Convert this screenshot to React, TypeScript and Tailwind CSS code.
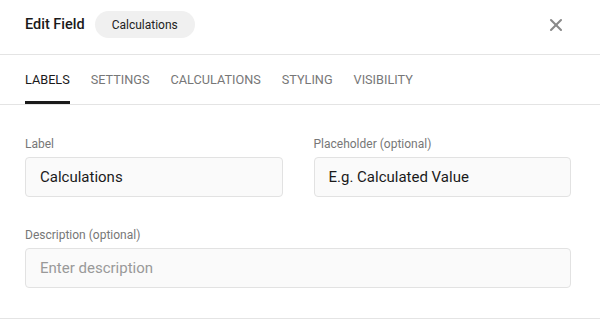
import { X } from 'lucide-react';

const tabs = ['Labels', 'Settings', 'Calculations', 'Styling', 'Visibility'];

export default function App() {
  return (
    <div className="w-[600px] h-[334px] bg-white font-['Roboto',sans-serif] text-[#222]">
      <div className="h-[55px] flex items-center pl-[25px] pr-[34px] pb-[5px] border-b border-[#e4e4e4]">
        <h1 className="text-[14.5px] font-medium text-[#1a1a1a]">Edit Field</h1>
        <span className="ml-[10px] h-[27px] px-[17px] rounded-full bg-[#f0f0f0] text-[12px] text-[#222] flex items-center">
          Calculations
        </span>
        <button className="ml-auto text-[#8a8a8a]">
          <X className="w-[20px] h-[20px]" strokeWidth={2.5} />
        </button>
      </div>

      <div className="flex gap-[21px] px-[25px] border-b border-[#e4e4e4] h-[50px]">
        {tabs.map((t, i) => (
          <div
            key={t}
            className={
              'flex items-center uppercase text-[12.7px] pt-[3px] border-b-[3px] ' +
              (i === 0 ? 'border-[#1a1a1a] text-[#1a1a1a]' : 'border-transparent text-[#777]')
            }
          >
            {t}
          </div>
        ))}
      </div>

      <div className="pl-[25px] pr-[29px] pt-[30px]">
        <div className="grid grid-cols-2 gap-x-[31px]">
          <div>
            <label className="block text-[12px] text-[#777] mb-[4px]">Label</label>
            <div className="h-[40px] rounded-[4px] border border-[#e2e2e2] bg-[#fafafa] px-[14px] flex items-center text-[15px] text-[#1a1a1a]">
              Calculations
            </div>
          </div>
          <div>
            <label className="block text-[12px] text-[#777] mb-[4px]">Placeholder (optional)</label>
            <div className="h-[40px] rounded-[4px] border border-[#e2e2e2] bg-[#fafafa] px-[14px] flex items-center text-[15px] text-[#1a1a1a]">
              E.g. Calculated Value
            </div>
          </div>
        </div>
        <div className="mt-[29px]">
          <label className="block text-[12px] text-[#777] mb-[4px]">Description (optional)</label>
          <div className="h-[40px] rounded-[4px] border border-[#e2e2e2] bg-[#fafafa] px-[14px] flex items-center text-[15px] text-[#999]">
            Enter description
          </div>
        </div>
      </div>
      <div className="mt-[30px] border-b border-[#e4e4e4]" />
    </div>
  );
}
